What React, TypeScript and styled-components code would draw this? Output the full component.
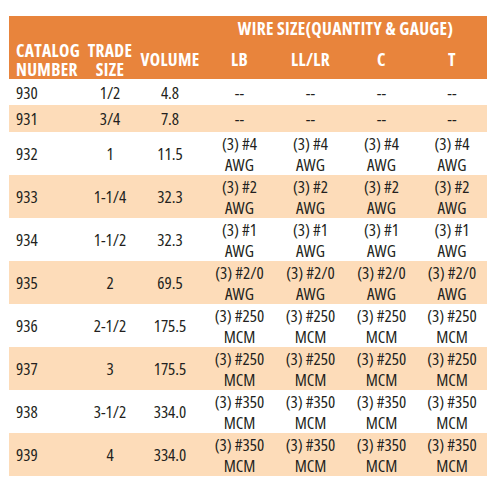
import styled, { createGlobalStyle } from "styled-components";

const GlobalStyle = createGlobalStyle`
  html, body {
    margin: 0;
    padding: 0;
    background: #ffffff;
  }
`;

const Page = styled.div`
  padding: 16px 13px 0 9px;
`;

const Table = styled.table`
  width: 478px;
  border-collapse: collapse;
  table-layout: fixed;
  font-family: "Open Sans", "Noto Sans", sans-serif;
  font-stretch: 75%;
  color: #231f20;
`;

const HeadCell = styled.th<{ $left?: boolean }>`
  background: #e8843c;
  color: #ffffff;
  font-weight: 700;
  font-size: 17.5px;
  letter-spacing: 0.3px;
  line-height: 19px;
  padding: 0;
  text-align: ${(p) => (p.$left ? "left" : "center")};
  padding-left: ${(p) => (p.$left ? "7px" : "0")};
  vertical-align: middle;
  white-space: nowrap;
`;

const HeadLine = styled.span`
  display: block;
  height: 19px;
`;

const TopRow = styled.tr`
  height: 24px;
`;

const SubRow = styled.tr`
  height: 39px;
`;

const BodyRow = styled.tr<{ $shaded: boolean; $h: number }>`
  height: ${(p) => p.$h}px;
  background: ${(p) => (p.$shaded ? "#fddcb9" : "#ffffff")};
`;

const Cell = styled.td<{ $left?: boolean }>`
  font-size: 17px;
  line-height: 21px;
  padding: 0;
  text-align: ${(p) => (p.$left ? "left" : "center")};
  padding-left: ${(p) => (p.$left ? "7px" : "0")};
  vertical-align: middle;
  white-space: nowrap;
`;

type Row = {
  cat: string;
  trade: string;
  volume: string;
  wire: string[] | null;
};

const rows: Row[] = [
  { cat: "930", trade: "1/2", volume: "4.8", wire: null },
  { cat: "931", trade: "3/4", volume: "7.8", wire: null },
  { cat: "932", trade: "1", volume: "11.5", wire: ["(3) #4", "AWG"] },
  { cat: "933", trade: "1-1/4", volume: "32.3", wire: ["(3) #2", "AWG"] },
  { cat: "934", trade: "1-1/2", volume: "32.3", wire: ["(3) #1", "AWG"] },
  { cat: "935", trade: "2", volume: "69.5", wire: ["(3) #2/0", "AWG"] },
  { cat: "936", trade: "2-1/2", volume: "175.5", wire: ["(3) #250", "MCM"] },
  { cat: "937", trade: "3", volume: "175.5", wire: ["(3) #250", "MCM"] },
  { cat: "938", trade: "3-1/2", volume: "334.0", wire: ["(3) #350", "MCM"] },
  { cat: "939", trade: "4", volume: "334.0", wire: ["(3) #350", "MCM"] },
];

const wireCols = ["LB", "LL/LR", "C", "T"];

export default function App() {
  return (
    <Page>
      <GlobalStyle />
      <Table>
        <colgroup>
          <col style={{ width: 75 }} />
          <col style={{ width: 52 }} />
          <col style={{ width: 68 }} />
          <col style={{ width: 71 }} />
          <col style={{ width: 71 }} />
          <col style={{ width: 71 }} />
          <col style={{ width: 70 }} />
        </colgroup>
        <thead>
          <TopRow>
            <HeadCell />
            <HeadCell />
            <HeadCell />
            <HeadCell colSpan={4}>WIRE SIZE(QUANTITY &amp; GAUGE)</HeadCell>
          </TopRow>
          <SubRow>
            <HeadCell $left>
              <HeadLine>CATALOG</HeadLine>
              <HeadLine>NUMBER</HeadLine>
            </HeadCell>
            <HeadCell>
              <HeadLine>TRADE</HeadLine>
              <HeadLine>SIZE</HeadLine>
            </HeadCell>
            <HeadCell>VOLUME</HeadCell>
            {wireCols.map((c) => (
              <HeadCell key={c}>{c}</HeadCell>
            ))}
          </SubRow>
        </thead>
        <tbody>
          {rows.map((r, i) => (
            <BodyRow key={r.cat} $shaded={i % 2 === 1} $h={i === 0 ? 26 : i === 1 ? 27 : 43}>
              <Cell $left>{r.cat}</Cell>
              <Cell>{r.trade}</Cell>
              <Cell>{r.volume}</Cell>
              {wireCols.map((c) => (
                <Cell key={c}>
                  {r.wire ? (
                    <>
                      {r.wire[0]}
                      <br />
                      {r.wire[1]}
                    </>
                  ) : (
                    "--"
                  )}
                </Cell>
              ))}
            </BodyRow>
          ))}
        </tbody>
      </Table>
    </Page>
  );
}
